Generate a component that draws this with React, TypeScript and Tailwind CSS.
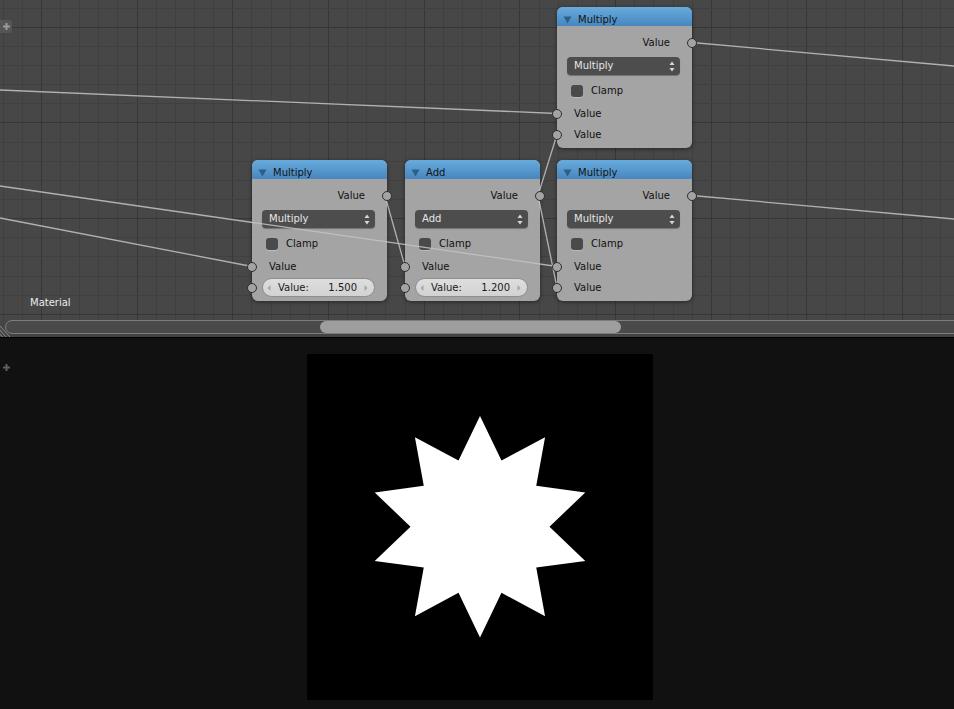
import React from "react"

// node editor grid, measured off the reference
const STEP = 19.14
const vLines = Array.from({ length: 50 }, (_, k) => ({ p: Math.round(2.6 + STEP * k), major: (k - 2) % 5 === 0 }))
const hLines = Array.from({ length: 18 }, (_, k) => ({ p: Math.round(7.6 + STEP * k), major: (k - 1) % 5 === 0 }))

function Grid() {
  return (
    <svg className="absolute inset-0" width="954" height="337" shapeRendering="crispEdges">
      {vLines.map((l) => (
        <line key={"v" + l.p} x1={l.p + 0.5} y1="0" x2={l.p + 0.5} y2="337" stroke={l.major ? "#373737" : "#404040"} strokeWidth="1" />
      ))}
      {hLines.map((l) => (
        <line key={"h" + l.p} x1="0" y1={l.p + 0.5} x2="954" y2={l.p + 0.5} stroke={l.major ? "#373737" : "#404040"} strokeWidth="1" />
      ))}
    </svg>
  )
}

function Wires() {
  const links: [number, number, number, number][] = [
    [0, 90, 557, 113.5],
    [0, 186, 557, 266.5],
    [0, 218, 252, 266.5],
    [385, 195.5, 405, 266.5],
    [538, 195.5, 557, 134.5],
    [538, 195.5, 557, 287.5],
    [692, 42.5, 954, 66],
    [692, 195.5, 954, 219],
  ]
  return (
    <svg className="pointer-events-none absolute inset-0 z-10" width="954" height="337">
      {links.map(([x1, y1, x2, y2], i) => (
        <line key={i} x1={x1} y1={y1} x2={x2} y2={y2} stroke="#c4c4c4" strokeWidth="1.3" opacity="0.85" />
      ))}
    </svg>
  )
}

function Socket({ side }: { side: "left" | "right" }) {
  return (
    <span
      className={
        side === "left"
          ? "absolute -left-[5px] top-1/2 z-20 h-[10px] w-[10px] -translate-y-1/2 rounded-full border border-[#2e2e2e] bg-[#a3a3a3]"
          : "absolute -right-[5px] top-1/2 z-20 h-[10px] w-[10px] -translate-y-1/2 rounded-full border border-[#2e2e2e] bg-[#a3a3a3]"
      }
    />
  )
}

function UpDown() {
  return (
    <svg width="6" height="11" viewBox="0 0 6 11">
      <path d="M3 0.5 L5.5 4 L0.5 4 Z" fill="#d8d8d8" />
      <path d="M3 10.5 L5.5 7 L0.5 7 Z" fill="#d8d8d8" />
    </svg>
  )
}

function NodeBox({ pos, title, op, value }: { pos: string; title: string; op: string; value?: string }) {
  return (
    <div className={"absolute h-[141px] w-[135px] rounded-[6px] bg-[#a4a4a4] shadow-[0_1px_4px_rgba(0,0,0,0.45)] " + pos}>
      <div className="flex h-[19px] items-center rounded-t-[6px] bg-linear-to-b from-[#68abdd] to-[#4786bf] pl-[6px] pt-[7px]">
        <svg width="9" height="8" viewBox="0 0 9 8">
          <path d="M0.5 0.5 L8.5 0.5 L4.5 7.5 Z" fill="#2c5f8a" />
        </svg>
        <span className="ml-[6px] text-[#141414]">{title}</span>
      </div>

      <div className="relative mt-[6px] flex h-[21px] items-center justify-end pr-[22px] text-[#111]">
        Value
        <Socket side="right" />
      </div>

      <div className="ml-[10px] mr-[12px] mt-[4px] flex h-[18px] items-center justify-between rounded-[4px] bg-[#4d4d4d] pl-[7px] pr-[5px] text-[#e6e6e6] shadow-[0_1px_1px_rgba(0,0,0,0.3)]">
        {op}
        <UpDown />
      </div>

      <div className="mt-[5px] flex h-[21px] items-center gap-[8px] pl-[14px] text-[#111]">
        <span className="h-[12px] w-[12px] rounded-[3px] bg-[#4a4a4a] shadow-[0_1px_0_rgba(255,255,255,0.25)]" />
        Clamp
      </div>

      <div className="relative mt-[2px] flex h-[21px] items-center pl-[17px] text-[#111]">
        Value
        <Socket side="left" />
      </div>

      {value ? (
        <div className="relative flex h-[21px] items-center">
          <div className="ml-[10px] mr-[12px] flex h-[19px] flex-1 items-center rounded-full border border-[#8f8f8f] bg-linear-to-b from-[#dedede] to-[#d2d2d2] pl-[4px] pr-[6px] text-[#1a1a1a]">
            <svg width="4" height="6" viewBox="0 0 4 6">
              <path d="M3.5 0 L0.5 3 L3.5 6 Z" fill="#a6a6a6" />
            </svg>
            <span className="ml-[7px]">Value:</span>
            <span className="ml-auto mr-[7px]">{value}</span>
            <svg width="4" height="6" viewBox="0 0 4 6">
              <path d="M0.5 0 L3.5 3 L0.5 6 Z" fill="#a6a6a6" />
            </svg>
          </div>
          <Socket side="left" />
        </div>
      ) : (
        <div className="relative flex h-[21px] items-center pl-[17px] text-[#111]">
          Value
          <Socket side="left" />
        </div>
      )}
    </div>
  )
}

function Star() {
  const pts: string[] = []
  for (let i = 0; i < 20; i++) {
    const a = (-90 + i * 18) * (Math.PI / 180)
    const r = i % 2 === 0 ? 110.7 : 69.5
    pts.push((173 + r * Math.cos(a)).toFixed(2) + "," + (172.7 + r * Math.sin(a)).toFixed(2))
  }
  return (
    <svg width="346" height="346" viewBox="0 0 346 346">
      <polygon points={pts.join(" ")} fill="#ffffff" />
    </svg>
  )
}

export default function App() {
  return (
    <div className="flex h-[709px] w-[954px] flex-col overflow-hidden font-['DejaVu_Sans',sans-serif] text-[10px] leading-none">
      {/* node editor */}
      <div className="relative h-[337px] shrink-0 overflow-hidden bg-[#474747]">
        <Grid />

        <NodeBox pos="left-[557px] top-[7px]" title="Multiply" op="Multiply" />
        <NodeBox pos="left-[252px] top-[160px]" title="Multiply" op="Multiply" value="1.500" />
        <NodeBox pos="left-[405px] top-[160px]" title="Add" op="Add" value="1.200" />
        <NodeBox pos="left-[557px] top-[160px]" title="Multiply" op="Multiply" />

        <Wires />

        {/* toolbar toggle */}
        <div className="absolute left-0 top-[20px] flex h-[13px] w-[12px] items-center justify-center rounded-r-[3px] bg-[#555555]">
          <svg width="7" height="7" viewBox="0 0 7 7">
            <path d="M2.5 0 H4.5 V2.5 H7 V4.5 H4.5 V7 H2.5 V4.5 H0 V2.5 H2.5 Z" fill="#9a9a9a" />
          </svg>
        </div>

        <span className="absolute left-[30px] top-[298px] text-[#ececec]">Material</span>

        {/* horizontal scrollbar */}
        <div className="absolute bottom-0 left-0 right-0 h-[4px] bg-[#434343]" />
        <div className="absolute left-[5px] right-[-12px] top-[320px] h-[14px] rounded-l-[7px] border border-[#7c7c7c] bg-[#4a4a4a]">
          <div className="ml-[314px] h-full w-[301px] rounded-full bg-[#9e9e9e]" />
        </div>

        {/* area split corner */}
        <svg className="absolute left-0 top-[323px]" width="12" height="14" viewBox="0 0 12 14">
          <path d="M0 3 L10 14 M0 7 L6 14 M0 11 L2.5 14" stroke="#8c8c8c" strokeWidth="1" />
        </svg>
      </div>

      <div className="h-px shrink-0 bg-black" />

      {/* image preview */}
      <div className="relative flex flex-1 bg-[#111111] pl-[307px] pt-[16px]">
        <svg className="absolute left-[3px] top-[26px]" width="7" height="7" viewBox="0 0 7 7">
          <path d="M2.5 0 H4.5 V2.5 H7 V4.5 H4.5 V7 H2.5 V4.5 H0 V2.5 H2.5 Z" fill="#5e5e5e" />
        </svg>
        <div className="h-[346px] w-[346px] bg-black">
          <Star />
        </div>
      </div>
    </div>
  )
}
